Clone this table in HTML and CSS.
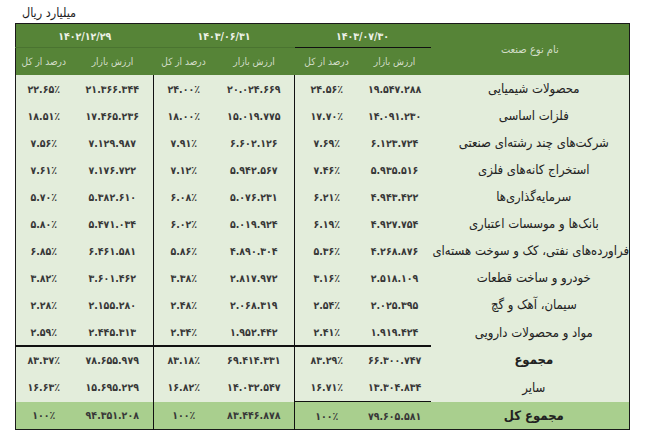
FILE: index.html
```html
<!DOCTYPE html>
<html lang="fa">
<head>
<meta charset="utf-8">
<link rel="stylesheet" href="styles.css">
</head>
<body>
<div class="page">
  <div class="unit">میلیارد ریال</div>
  <table class="grid" dir="rtl">
    <colgroup>
      <col class="c-name"><col class="c-v1"><col class="c-p1"><col class="c-v2"><col class="c-p2"><col class="c-v3"><col class="c-p3">
    </colgroup>
    <thead>
      <tr class="h1">
        <th rowspan="2" class="hname">نام نوع صنعت</th>
        <th colspan="2" class="date date-first">۱۴۰۳/۰۷/۳۰</th>
        <th colspan="2" class="date">۱۴۰۳/۰۶/۳۱</th>
        <th colspan="2" class="date">۱۴۰۲/۱۲/۲۹</th>
      </tr>
      <tr class="h2">
        <th>ارزش بازار</th><th>درصد از کل</th>
        <th>ارزش بازار</th><th>درصد از کل</th>
        <th>ارزش بازار</th><th>درصد از کل</th>
      </tr>
    </thead>
    <tbody>
      <tr class="row"><td class="name">محصولات شیمیایی</td><td>۱۹.۵۴۷.۲۸۸</td><td class="sep">۲۴.۵۶٪</td><td>۲۰.۰۲۴.۶۶۹</td><td class="sep">۲۴.۰۰٪</td><td>۲۱.۳۶۶.۳۴۴</td><td>۲۲.۶۵٪</td></tr>
      <tr class="row"><td class="name">فلزات اساسی</td><td>۱۴.۰۹۱.۲۳۰</td><td class="sep">۱۷.۷۰٪</td><td>۱۵.۰۱۹.۷۷۵</td><td class="sep">۱۸.۰۰٪</td><td>۱۷.۴۶۵.۲۳۶</td><td>۱۸.۵۱٪</td></tr>
      <tr class="row"><td class="name">شرکت‌های چند رشته‌ای صنعتی</td><td>۶.۱۲۳.۷۲۴</td><td class="sep">۷.۶۹٪</td><td>۶.۶۰۲.۱۲۶</td><td class="sep">۷.۹۱٪</td><td>۷.۱۲۹.۹۸۷</td><td>۷.۵۶٪</td></tr>
      <tr class="row"><td class="name">استخراج کانه‌های فلزی</td><td>۵.۹۳۵.۵۱۶</td><td class="sep">۷.۴۶٪</td><td>۵.۹۴۲.۵۶۷</td><td class="sep">۷.۱۲٪</td><td>۷.۱۷۶.۷۲۲</td><td>۷.۶۱٪</td></tr>
      <tr class="row"><td class="name">سرمایه‌گذاری‌ها</td><td>۴.۹۴۳.۴۲۲</td><td class="sep">۶.۲۱٪</td><td>۵.۰۷۶.۲۳۱</td><td class="sep">۶.۰۸٪</td><td>۵.۳۸۲.۶۱۰</td><td>۵.۷۰٪</td></tr>
      <tr class="row"><td class="name">بانک‌ها و موسسات اعتباری</td><td>۴.۹۲۷.۷۵۴</td><td class="sep">۶.۱۹٪</td><td>۵.۰۱۹.۹۲۴</td><td class="sep">۶.۰۲٪</td><td>۵.۴۷۱.۰۳۴</td><td>۵.۸۰٪</td></tr>
      <tr class="row"><td class="name">فراورده‌های نفتی، کک و سوخت هسته‌ای</td><td>۴.۲۶۸.۸۷۶</td><td class="sep">۵.۳۶٪</td><td>۴.۸۹۰.۳۰۴</td><td class="sep">۵.۸۶٪</td><td>۶.۴۶۱.۵۸۱</td><td>۶.۸۵٪</td></tr>
      <tr class="row"><td class="name">خودرو و ساخت قطعات</td><td>۲.۵۱۸.۱۰۹</td><td class="sep">۳.۱۶٪</td><td>۲.۸۱۷.۹۷۲</td><td class="sep">۳.۳۸٪</td><td>۳.۶۰۱.۴۶۲</td><td>۳.۸۲٪</td></tr>
      <tr class="row"><td class="name">سیمان، آهک و گچ</td><td>۲.۰۲۵.۳۹۵</td><td class="sep">۲.۵۴٪</td><td>۲.۰۶۸.۳۱۹</td><td class="sep">۲.۴۸٪</td><td>۲.۱۵۵.۲۸۰</td><td>۲.۲۸٪</td></tr>
      <tr class="row"><td class="name">مواد و محصولات دارویی</td><td>۱.۹۱۹.۴۲۴</td><td class="sep">۲.۴۱٪</td><td>۱.۹۵۲.۴۴۲</td><td class="sep">۲.۳۴٪</td><td>۲.۴۴۵.۳۱۳</td><td>۲.۵۹٪</td></tr>
      <tr class="row sum"><td class="name strong">مجموع</td><td>۶۶.۳۰۰.۷۴۷</td><td class="sep">۸۳.۲۹٪</td><td class="wsep">۶۹.۴۱۴.۳۳۱</td><td class="sep">۸۳.۱۸٪</td><td>۷۸.۶۵۵.۹۷۹</td><td>۸۳.۳۷٪</td></tr>
      <tr class="row other"><td class="name">سایر</td><td class="under">۱۳.۳۰۴.۸۳۴</td><td class="sep under">۱۶.۷۱٪</td><td class="wsep">۱۴.۰۳۲.۵۴۷</td><td class="sep">۱۶.۸۲٪</td><td>۱۵.۶۹۵.۲۲۹</td><td>۱۶.۶۳٪</td></tr>
      <tr class="row total"><td class="name strong">مجموع کل</td><td>۷۹.۶۰۵.۵۸۱</td><td class="sep">۱۰۰٪</td><td class="wsep">۸۳.۴۴۶.۸۷۸</td><td class="sep">۱۰۰٪</td><td>۹۴.۳۵۱.۲۰۸</td><td>۱۰۰٪</td></tr>
    </tbody>
  </table>
</div>
</body>
</html>
```

FILE: styles.css
```css
html, body {
  margin: 0;
  padding: 0;
  background: #ffffff;
}

.page {
  padding: 4px 0 0 15px;
  font-family: "DejaVu Sans Condensed", "DejaVu Sans", sans-serif;
  color: #2b2b2b;
}

.unit {
  height: 19px;
  line-height: 17px;
  font-size: 12.5px;
  padding-left: 7px;
  color: #1e1e1e;
}

.grid {
  width: 614px;
  table-layout: fixed;
  border-collapse: collapse;
  border: 1px solid #1a1a1a;
}

.c-name { width: 199px; }
.c-v1 { width: 72px; }
.c-p1 { width: 64px; }
.c-v2 { width: 81px; }
.c-p2 { width: 60px; }
.c-v3 { width: 82px; }
.c-p3 { width: 56px; }

.grid th {
  background: #568437;
  color: #d3dec8;
  font-weight: normal;
  padding: 0;
  text-align: center;
}

.h1 th { height: 23px; }
.h1 .date {
  font-weight: bold;
  font-size: 10.5px;
  color: #eef2e8;
  border-bottom: 1px solid #4a7430;
}
.h1 .date-first { border-bottom: 1px solid #111; }
.hname { font-size: 11px; padding-left: 6px; }

.h2 th {
  height: 27px;
  font-size: 10px;
}

.grid td {
  background: #e3eddb;
  text-align: center;
  padding: 0;
  font-size: 10.5px;
  font-weight: bold;
  color: #383838;
  height: 27px;
  white-space: nowrap;
}

.grid td.name {
  font-size: 13px;
  font-weight: normal;
  color: #222;
  padding-left: 8px;
}

.grid td.sep { border-left: 1px solid #111; }

.sum td { height: 26px; border-top: 2px solid #111; }
.sum td.name { border-top: none; }
.other td { height: 28px; }
.grid td.under { border-bottom: 1px solid #111; }
.grid td.wsep { border-right: 1px solid #ffffff; }

.total td { background: #a9cf8e; height: 27px; }

.grid td.strong { font-weight: bold; font-size: 13px; }
```
